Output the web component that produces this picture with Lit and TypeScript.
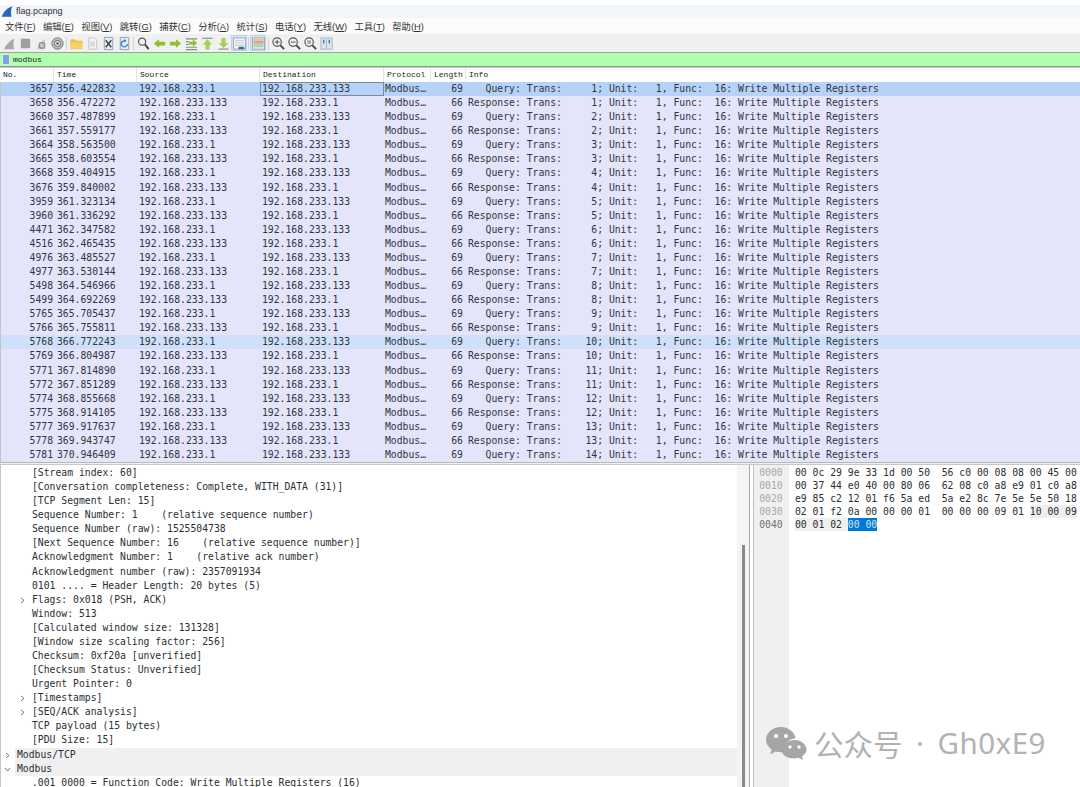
import { LitElement, html, css, svg } from "lit";
import { customElement } from "lit/decorators.js";
import { classMap } from "lit/directives/class-map.js";

const SRC = "192.168.233.1";
const DST = "192.168.233.133";
const PKTS: [string, string][] = [
  ["3657", "356.422832"], ["3658", "356.472272"], ["3660", "357.487899"], ["3661", "357.559177"],
  ["3664", "358.563500"], ["3665", "358.603554"], ["3668", "359.404915"], ["3676", "359.840002"],
  ["3959", "361.323134"], ["3960", "361.336292"], ["4471", "362.347582"], ["4516", "362.465435"],
  ["4976", "363.485527"], ["4977", "363.530144"], ["5498", "364.546966"], ["5499", "364.692269"],
  ["5765", "365.705437"], ["5766", "365.755811"], ["5768", "366.772243"], ["5769", "366.804987"],
  ["5771", "367.814890"], ["5772", "367.851289"], ["5774", "368.855668"], ["5775", "368.914105"],
  ["5777", "369.917637"], ["5778", "369.943747"], ["5781", "370.946409"],
];

const MENUS: [string, string][] = [
  ["文件", "F"], ["编辑", "E"], ["视图", "V"], ["跳转", "G"], ["捕获", "C"], ["分析", "A"],
  ["统计", "S"], ["电话", "Y"], ["无线", "W"], ["工具", "T"], ["帮助", "H"],
];

type Detail = { t: string; lvl: number; arrow?: string; band?: boolean };
const DETAILS: Detail[] = [
  { t: "[Stream index: 60]", lvl: 2 },
  { t: "[Conversation completeness: Complete, WITH_DATA (31)]", lvl: 2 },
  { t: "[TCP Segment Len: 15]", lvl: 2 },
  { t: "Sequence Number: 1    (relative sequence number)", lvl: 2 },
  { t: "Sequence Number (raw): 1525504738", lvl: 2 },
  { t: "[Next Sequence Number: 16    (relative sequence number)]", lvl: 2 },
  { t: "Acknowledgment Number: 1    (relative ack number)", lvl: 2 },
  { t: "Acknowledgment number (raw): 2357091934", lvl: 2 },
  { t: "0101 .... = Header Length: 20 bytes (5)", lvl: 2 },
  { t: "Flags: 0x018 (PSH, ACK)", lvl: 2, arrow: "r" },
  { t: "Window: 513", lvl: 2 },
  { t: "[Calculated window size: 131328]", lvl: 2 },
  { t: "[Window size scaling factor: 256]", lvl: 2 },
  { t: "Checksum: 0xf20a [unverified]", lvl: 2 },
  { t: "[Checksum Status: Unverified]", lvl: 2 },
  { t: "Urgent Pointer: 0", lvl: 2 },
  { t: "[Timestamps]", lvl: 2, arrow: "r" },
  { t: "[SEQ/ACK analysis]", lvl: 2, arrow: "r" },
  { t: "TCP payload (15 bytes)", lvl: 2 },
  { t: "[PDU Size: 15]", lvl: 2 },
  { t: "Modbus/TCP", lvl: 1, arrow: "r", band: true },
  { t: "Modbus", lvl: 1, arrow: "d", band: true },
  { t: ".001 0000 = Function Code: Write Multiple Registers (16)", lvl: 2 },
];

const icon = (body: unknown) =>
  html`<svg class="ico" viewBox="0 0 16 16" width="16" height="16">${body}</svg>`;

const G = "#8fbf2f";
const ICONS = {
  fin: svg`<path d="M2 14 C5 9 8 5 13 3 C12 7 12 11 13 14 Z" fill="#a8a8a8"/>`,
  stop: svg`<rect x="3" y="3" width="10" height="10" rx="1" fill="#a0a0a0"/>`,
  restart: svg`<path d="M3 14 C5 9 8 6 12 3 C11 7 12 11 12 14 Z" fill="#c8c8c8"/><circle cx="8.5" cy="10" r="3" fill="none" stroke="#8a8a8a" stroke-width="1.3"/>`,
  gear: svg`<circle cx="8" cy="8" r="6" fill="#c0c0c0" stroke="#707070"/><circle cx="8" cy="8" r="3.2" fill="#f4f4f4" stroke="#555"/><circle cx="8" cy="8" r="1.4" fill="#555"/>`,
  folder: svg`<path d="M2 4 h4 l1 1.5 h7 v8 H2 Z" fill="#f3c34b" stroke="#e0a92e" stroke-width=".6"/><rect x="2" y="7" width="12" height="6.5" fill="#fad264"/>`,
  file: svg`<path d="M4 2 h6 l2.5 2.5 V14 H4 Z" fill="#f2f2f2" stroke="#c4c4c4"/><path d="M5.5 6.5 h5 M5.5 8.5 h5 M5.5 10.5 h5" stroke="#c8c8c8"/>`,
  close: svg`<path d="M3.5 1.5 h9 v13 h-9 Z" fill="#e6eef6" stroke="#8aa0b8"/><path d="M5 4.5 L11 12 M11 4.5 L5 12" stroke="#444" stroke-width="1.6"/>`,
  reload: svg`<path d="M3.5 1.5 h9 v13 h-9 Z" fill="#e6eef6" stroke="#8aa0b8"/><path d="M11 8.5 A3.2 3.2 0 1 1 8 5.2" fill="none" stroke="#3b7fc4" stroke-width="1.5"/><path d="M7.5 3 L10.5 5.2 L7.5 7 Z" fill="#3b7fc4"/>`,
  find: svg`<circle cx="6.5" cy="6" r="3.8" fill="#eef3f8" stroke="#555" stroke-width="1.3"/><path d="M9.5 9 L13.5 14" stroke="#444" stroke-width="2"/>`,
  back: svg`<path d="M2 8 L7.5 3.5 V6 H14 V10 H7.5 V12.5 Z" fill="${G}"/>`,
  fwd: svg`<path d="M14 8 L8.5 3.5 V6 H2 V10 H8.5 V12.5 Z" fill="${G}"/>`,
  goto: svg`<path d="M2 3 h12 M2 6 h3 M2 9 h3 M2 12 h12 M2 14.5 h12" stroke="#8a8a8a" stroke-width="1.2"/><path d="M14 7.5 L9.5 3.5 V6 H5 V9 H9.5 V11.5 Z" fill="${G}"/>`,
  top: svg`<path d="M2.5 2.5 h11" stroke="#9a9a9a" stroke-width="1.4"/><path d="M8 3.5 L13 9 H10.2 V14.5 H5.8 V9 H3 Z" fill="#a6cf55"/>`,
  bottom: svg`<path d="M2.5 14 h11" stroke="#9a9a9a" stroke-width="1.4"/><path d="M8 13 L13 7.5 H10.2 V2 H5.8 V7.5 H3 Z" fill="#a6cf55"/>`,
  auto: svg`<rect x="1.5" y="2" width="13" height="12" fill="#f0f4f8" stroke="#9aa5b0"/><path d="M3 5 h10 M3 7.5 h10 M3 10 h10" stroke="#c4c8cc"/><rect x="7" y="11.5" width="6" height="2.5" fill="#2a6cb0"/>`,
  color: svg`<rect x="1.5" y="2" width="13" height="12" fill="#f5f5f5" stroke="#9aa5b0"/><rect x="2.5" y="3" width="11" height="2.2" fill="#e8c872"/><rect x="2.5" y="5.3" width="11" height="2.2" fill="#e49a9a"/><rect x="2.5" y="7.6" width="11" height="2.2" fill="#a6c8e8"/><rect x="2.5" y="9.9" width="11" height="2.2" fill="#a8d890"/>`,
  zin: svg`<circle cx="6.5" cy="6.5" r="4.5" fill="#eef3f8" stroke="#555" stroke-width="1.2"/><path d="M10 10 L14 14" stroke="#444" stroke-width="2"/><path d="M4 6.5 h5 M6.5 4 v5" stroke="#444"/>`,
  zout: svg`<circle cx="6.5" cy="6.5" r="4.5" fill="#eef3f8" stroke="#555" stroke-width="1.2"/><path d="M10 10 L14 14" stroke="#444" stroke-width="2"/><path d="M4 6.5 h5" stroke="#444"/>`,
  znorm: svg`<circle cx="6.5" cy="6.5" r="4.5" fill="#eef3f8" stroke="#555" stroke-width="1.2"/><path d="M10 10 L14 14" stroke="#444" stroke-width="2"/><path d="M4.5 5.5 h4 M4.5 7.5 h4" stroke="#666"/>`,
  resize: svg`<rect x="2" y="2" width="12" height="12" fill="#dfe6ee" stroke="#aab4c0"/><path d="M8 2 v12" stroke="#aab4c0"/><path d="M5 4 v4 M11 4 v4" stroke="#3b7fc4" stroke-width="1.6"/>`,
};

const HEX: { off: string; cells: [string, string][] }[] = [
  { off: "0000", cells: [["00 0c 29 9e 33 1d 00 50  56 c0 00 08 08 00 45 00", ""]] },
  { off: "0010", cells: [["00 37 44 e0 40 00 80 06  62 08 c0 a8 e9 01 c0 a8", ""]] },
  { off: "0020", cells: [["e9 85 c2 12 01 f6 5a ed  5a e2 8c 7e 5e 5e 50 18", ""]] },
  { off: "0030", cells: [["02 01 f2 0a 00 00 00 01  00 00 00 09 01 ", ""], ["10 00 09", "rel"]] },
  { off: "0040", cells: [["00 01 02 ", "rel"], ["00 00", "sel"]] },
];

@customElement("app-root")
export class AppRoot extends LitElement {
  static styles = css`
    :host {
      display: flex;
      flex-direction: column;
      width: 1080px;
      height: 787px;
      overflow: hidden;
      position: relative;
      background: #fff;
      font-family: "DejaVu Sans Mono", "Liberation Mono", monospace;
      font-size: 9.75px;
      color: #2a2f33;
    }
    .title {
      height: 12px;
      margin-top: 5px;
      padding: 0 0 1px 1px;
      background: #f2f6fa;
      flex: none;
      display: flex;
      align-items: center;
      gap: 3px;
      font: 9px "Liberation Sans", sans-serif;
      color: #333;
    }
    .menu {
      height: 16px;
      flex: none;
      display: flex;
      align-items: center;
      gap: 7.4px;
      padding-left: 5px;
      background: #fbfbfb;
      font: 9.3px "Liberation Sans", "Noto Sans CJK SC", sans-serif;
      color: #333;
    }
    .menu u { text-underline-offset: 1px; }
    .tools {
      height: 18px;
      flex: none;
      display: flex;
      align-items: center;
      padding-left: 1px;
      background: #f0f0f0;
    }
    .tool { width: 16px; height: 16px; flex: none; display: flex; align-items: center; justify-content: center; }
    .tool.on { background: #d5e7f8; box-shadow: inset 0 0 0 1px #b8d6f0; border-radius: 1px; }
    .ico { display: block; width: 15px; height: 15px; }
    .sep { width: 1px; height: 13px; background: #d4d4d4; margin: 0 1px; flex: none; }
    .sep.w { margin: 0 1.5px; }
    .filter {
      height: 13px;
      flex: none;
      display: flex;
      align-items: center;
      gap: 3px;
      padding-left: 2px;
      background: #afffaf;
      border-top: 1px solid #a0a0a0;
      border-bottom: 1px solid #8c9c8c;
      font: 8px "Liberation Mono", monospace;
      color: #222;
    }
    .mark { width: 6px; height: 9px; background: #7aa6da; border: 1px solid #dfe8f2; flex: none; }
    .head, .row {
      display: grid;
      grid-template-columns: 54px 83px 123px 124px 47px 35px 1fr;
      flex: none;
    }
    .head {
      height: 15px;
      border-top: 1px solid #c8c8c8;
      box-sizing: border-box;
      font: 8px/13px "Liberation Mono", monospace;
      color: #222;
    }
    .head span { border-right: 1px solid #e4e4e4; padding-left: 3px; overflow: hidden; }
    .head span:last-child { border-right: 0; }
    .list { flex: none; height: 380px; overflow: hidden; border-left: 1px solid #c4c4c4; }
    .row {
      height: 14.08px;
      line-height: 14.08px;
      background: #e4e4fb;
      color: #30373f;
      white-space: pre;
      margin-left: -1px;
    }
    .row.sel { background: #b7d2f8; }
    .row.mid { background: #cfe0fa; }
    .row > span { overflow: hidden; }
    .no { text-align: right; padding-right: 1px; }
    .tm { padding-left: 3px; }
    .ad { padding-left: 2px; }
    .ad.focus { box-shadow: inset 0 0 0 1px #7a8aa0; }
    .pr { padding-left: 1px; }
    .ln { text-align: right; padding-right: 3px; }
    .in { padding-left: 2px; }
    .split {
      height: 3px;
      flex: none;
      background: #f0f0f0;
      border-top: 1px solid #b8b8b8;
      border-bottom: 1px solid #c8c8c8;
      box-sizing: border-box;
    }
    .bottom { flex: 1; min-height: 0; display: flex; }
    .tree { width: 737px; flex: none; overflow: hidden; border-left: 1px solid #c4c4c4; box-sizing: border-box; padding-top: 1px; }
    .dl {
      height: 14.08px;
      line-height: 14.08px;
      white-space: pre;
      position: relative;
      color: #2a2f33;
    }
    .dl.lvl1 { padding-left: 16px; }
    .dl.lvl2 { padding-left: 31px; }
    .dl.band { background: linear-gradient(#f0f0f0, #f0f0f0) 14px 0 no-repeat; }
    .arr { position: absolute; top: 4px; width: 7px; height: 7px; }
    .lvl1 .arr { left: 3px; }
    .lvl2 .arr { left: 18px; }
    .sb {
      width: 13px;
      flex: none;
      display: flex;
      flex-direction: column;
      background: #f4f4f4;
      border-right: 1px solid #a8a8a8;
      box-sizing: border-box;
      padding-left: 5px;
    }
    .sb i { display: block; width: 3px; background: #8a8a8a; margin-top: 80px; flex: 1; }
    .hex { flex: 1; display: flex; border-left: 1px solid #c0c0c0; margin-left: 3px; }
    .gutter {
      width: 35px;
      flex: none;
      background: #f0f0f0;
      padding-top: 1px;
      box-sizing: border-box;
      color: #a8a8a8;
      text-align: center;
    }
    .gutter div { height: 13px; line-height: 13px; padding-right: 1px; }
    .gutter div.cur { color: #707070; }
    .bytes { padding: 1px 0 0 6px; color: #2a2f33; }
    .bytes div { height: 13px; line-height: 13px; white-space: pre; }
    .rel { background: #efefef; display: inline-block; height: 13px; }
    .hsel { background: #0078d7; color: #cfe6fa; display: inline-block; height: 13px; }
    .wm {
      position: absolute;
      left: 765px;
      top: 724px;
      display: flex;
      align-items: center;
      color: #b2b2b2;
      font: 29.5px/38px "Noto Sans CJK SC", "Noto Sans", sans-serif;
      white-space: pre;
    }
    .wm svg { display: block; flex: none; margin-right: 7px; }
    .dot { width: 35px; text-align: center; font-family: "Noto Sans", sans-serif; }
    .gh { letter-spacing: 0.5px; font-family: "Noto Sans", sans-serif; }
  `;

  private info(i: number) {
    const q = i % 2 === 0;
    const n = String(Math.floor(i / 2) + 1).padStart(6, " ");
    return `${q ? "   Query:" : "Response:"} Trans:${n}; Unit:   1, Func:  16: Write Multiple Registers`;
  }

  private tool(k: keyof typeof ICONS, on = false) {
    return html`<span class=${classMap({ tool: true, on })}>${icon(ICONS[k])}</span>`;
  }

  render() {
    return html`
      <div class="title">
        <svg viewBox="0 0 16 16" width="12" height="13"><path d="M1 15 C3 9 8 3 15 1 C13 6 13 11 14 15 Z" fill="#2a66b8"/></svg>
        <span>flag.pcapng</span>
      </div>
      <div class="menu">${MENUS.map(([a, k]) => html`<span>${a}(<u>${k}</u>)</span>`)}</div>
      <div class="tools">
        ${this.tool("fin")}${this.tool("stop")}${this.tool("restart")}${this.tool("gear")}
        <i class="sep"></i>
        ${this.tool("folder")}${this.tool("file")}${this.tool("close")}${this.tool("reload")}
        <i class="sep"></i>
        ${this.tool("find")}${this.tool("back")}${this.tool("fwd")}${this.tool("goto")}${this.tool("top")}${this.tool("bottom")}${this.tool("auto", true)}
        <i class="sep"></i>
        ${this.tool("color", true)}
        <i class="sep w"></i>
        ${this.tool("zin")}${this.tool("zout")}${this.tool("znorm")}${this.tool("resize")}
      </div>
      <div class="filter"><i class="mark"></i><span>modbus</span></div>
      <div class="head">
        <span>No.</span><span>Time</span><span>Source</span><span>Destination</span><span>Protocol</span><span>Length</span><span>Info</span>
      </div>
      <div class="list">
        ${PKTS.map(([no, tm], i) => {
          const q = i % 2 === 0;
          return html`<div class=${classMap({ row: true, sel: i === 0, mid: i === 18 })}>
            <span class="no">${no}</span>
            <span class="tm">${tm}</span>
            <span class="ad">${q ? SRC : DST}</span>
            <span class=${classMap({ ad: true, focus: i === 0 })}>${q ? DST : SRC}</span>
            <span class="pr">Modbus…</span>
            <span class="ln">${q ? "69" : "66"}</span>
            <span class="in">${this.info(i)}</span>
          </div>`;
        })}
      </div>
      <div class="split"></div>
      <div class="bottom">
        <div class="tree">
          ${DETAILS.map(
            (d) => html`<div class=${classMap({ dl: true, lvl1: d.lvl === 1, lvl2: d.lvl === 2, band: !!d.band })}>${d.arrow
              ? html`<svg class="arr" viewBox="0 0 7 7">
                  <path d=${d.arrow === "r" ? "M2 1 L5 3.5 L2 6" : "M1 2 L3.5 5 L6 2"} fill="none" stroke="#777" stroke-width="1"/>
                </svg>`
              : ""}${d.t}</div>`
          )}
        </div>
        <div class="sb"><i></i></div>
        <div class="hex">
          <div class="gutter">
            ${HEX.map((h, i) => html`<div class=${classMap({ cur: i === 4 })}>${h.off}</div>`)}
          </div>
          <div class="bytes">
            ${HEX.map(
              (h) => html`<div>${h.cells.map(([t, c]) =>
                c === "rel" ? html`<span class="rel">${t}</span>` : c === "sel" ? html`<span class="hsel">${t}</span>` : t
              )}</div>`
            )}
          </div>
        </div>
      </div>
      <div class="wm">
        <svg viewBox="0 0 42 34" width="42" height="34">
          <path d="M16 1 C7.5 1 1 6.8 1 13.8 C1 17.8 3.2 21.3 6.6 23.6 L5.2 28.4 L10.6 25.4 C12.2 25.9 14 26.2 16 26.2 C17 26.2 18 26.1 18.9 25.9 C17.6 19 23 12.6 30.8 12.2 C29.4 5.9 23.3 1 16 1 Z" fill="#a6a6a6"/>
          <path d="M29.5 14 C22.6 14 17 18.6 17 24.2 C17 29.8 22.6 32.4 29.5 32.4 C31 32.4 32.4 32.2 33.6 31.8 L38 34 L37 30.2 C39.6 28.4 41.6 26.4 41.6 24.2 C41.6 18.6 36.3 14 29.5 14 Z" fill="#a6a6a6"/>
          <circle cx="11" cy="10" r="2" fill="#fff"/><circle cx="21" cy="10" r="2" fill="#fff"/>
          <circle cx="25" cy="21" r="1.7" fill="#fff"/><circle cx="34" cy="21" r="1.7" fill="#fff"/>
        </svg>
        <span>公众号</span><span class="dot">·</span><span class="gh">Gh0xE9</span>
      </div>
    `;
  }
}
